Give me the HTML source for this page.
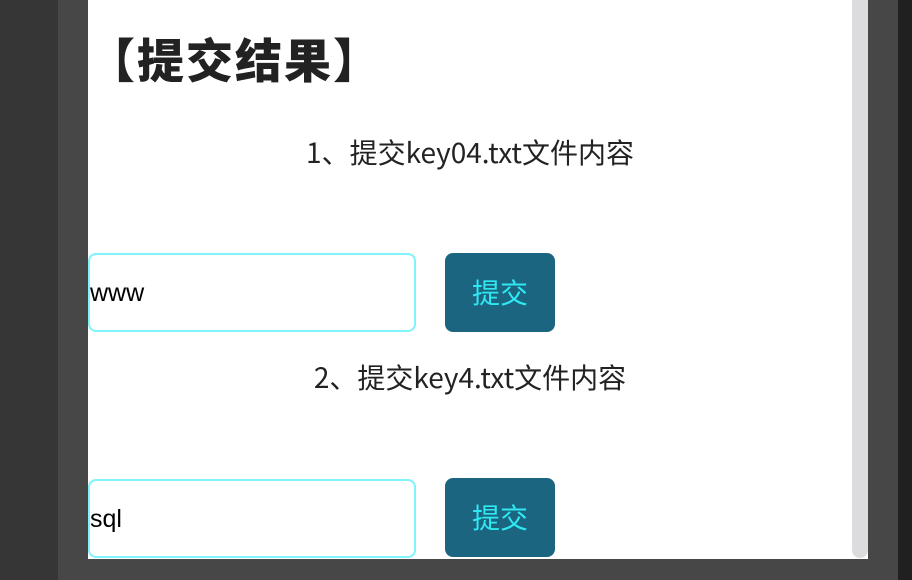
<!DOCTYPE html>
<html><head><meta charset="utf-8"><style>
body{margin:0;width:912px;height:580px;background:#474747;position:relative;overflow:hidden;font-family:"Liberation Sans","Noto Sans CJK SC",sans-serif}
.l{position:absolute;left:0;top:0;width:58px;height:580px;background:#363636}
.r{position:absolute;left:898px;top:0;width:14px;height:580px;background:#202020}
.p{position:absolute;left:88px;top:0;width:780px;height:559px;background:#fff}
.sb{position:absolute;left:852px;top:0;width:16px;height:558px;background:#dcdcdf;border-radius:0 0 8px 8px}
h1{position:absolute;left:0px;top:26px;margin:0;font-size:47px;font-weight:900;color:#222;line-height:64px;font-family:"Noto Sans CJK SC",sans-serif;letter-spacing:2px}
.t{position:absolute;left:0;width:764px;text-align:center;font-size:28px;color:#222;font-family:"Noto Sans CJK SC",sans-serif;line-height:36px;letter-spacing:0}
.in{position:absolute;left:0;width:324px;height:75px;border:2px solid #7ff4fa;border-radius:8px;box-sizing:content-box;font-size:25px;line-height:77px;color:#000}
.b{position:absolute;left:357px;width:110px;height:79px;background:#1c6580;border-radius:8px;color:#2ee8f2;font-size:28px;text-align:center;line-height:79px;font-family:"Noto Sans CJK SC",sans-serif}
</style></head><body>
<div class="l"></div><div class="r"></div>
<div class="p">
<h1>【提交结果】</h1>
<div class="t" style="top:134px">1、提交key04.txt文件内容</div>
<div class="in" style="top:253px">www</div>
<div class="b" style="top:253px">提交</div>
<div class="t" style="top:359px">2、提交key4.txt文件内容</div>
<div class="in" style="top:479px">sql</div>
<div class="b" style="top:478px">提交</div>
</div>
<div class="sb"></div>
</body></html>
